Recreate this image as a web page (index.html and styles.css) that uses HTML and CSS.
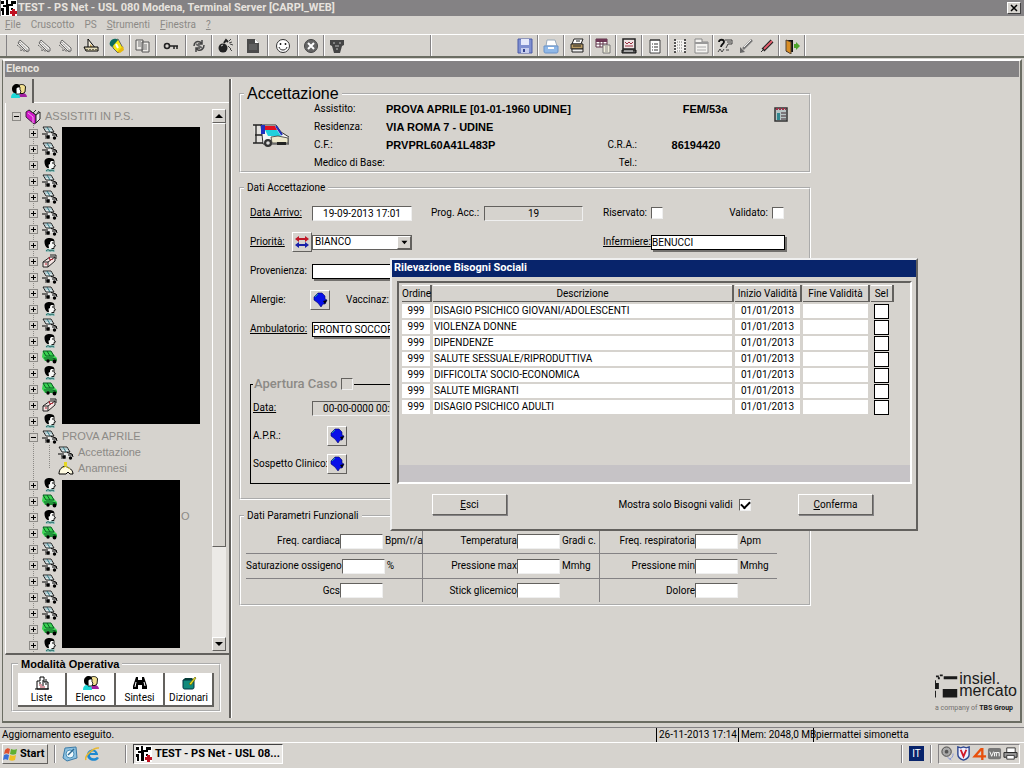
FILE: index.html
```html
<!DOCTYPE html>
<html lang="it">
<head>
<meta charset="utf-8">
<title>TEST - PS Net</title>
<link rel="stylesheet" href="styles.css">
</head>
<body>
<svg class="defs" aria-hidden="true">
  <symbol id="i-amb" viewBox="0 0 16 14"><path d="M1 1h8l3 5H4z" fill="#dfeaec" stroke="#111" stroke-width=".9"/><path d="M5 1l3 5" stroke="#256b75"/><path d="M3 3h7" stroke="#6aa0a8" stroke-width=".8"/><path d="M5 7h8l2 2v2H4z" fill="#e8e8e6"/><path d="M0 8h6M3 10h5M9 6.500l5 1.500 1 3M10 9h5" stroke="#000" fill="none"/><path d="M3 12h5" stroke="#000" stroke-width=".8"/><circle cx="6" cy="11" r="1.700"/><circle cx="12.500" cy="12" r="1.700"/></symbol>
  <symbol id="i-ambg" viewBox="0 0 16 14"><path d="M1 1h8l3 4 3 3v3H3L0 7z" fill="#3ad452"/><path d="M1 1h8l3 5H4zM5 1l3 5M2 8h8l4 1" fill="none" stroke="#0b5c24"/><path d="M3 10h12" stroke="#0a4a1c"/><circle cx="6" cy="11" r="1.700"/><circle cx="12.500" cy="11.500" r="1.900"/></symbol>
  <symbol id="i-per" viewBox="0 0 16 14"><path d="M4 14c-1-2 0-3 2-3l5-.5c2 .5 2 1.500 2 3.500z" fill="#9fc4c0"/><path d="M6 3h6v3l1.500 2-1.500.5v2l-2 .5H7z" fill="#f6f6f4"/><path d="M12 3v3l1.500 2-1.500.5v2H9.500" fill="none" stroke="#000" stroke-width=".9"/><path d="M2.500 4c0-3 2-4 5-4S12 .8 12.500 3H9L8 4.500V6.500L7 6l-.5 1.500.5 2.500H5.500C3.500 9 2.500 6.500 2.500 4z"/><path d="M10 5h1.500" stroke="#000"/><path d="M4 13l2-1.500 2 1.500 2-1 2 1" stroke="#1f6a64" fill="none"/></symbol>
  <symbol id="i-box" viewBox="0 0 16 14"><path d="M1 8l7-5h5v4l-7 6H1z" fill="#f4e4e2" stroke="#222"/><path d="M1 8h5v5M6 8l7-5" stroke="#222" fill="none"/><path d="M7 3l1 3 3-1M3 10h2" stroke="#b02030" fill="none"/><path d="M8 1h6v4" stroke="#222" fill="none"/></symbol>
  <symbol id="i-ana" viewBox="0 0 16 14"><path d="M1 12c0-5 3-7 6-8l4 2c2 1 4 3 4 6h-3l-2-2-2 2z" fill="#fffbe0" stroke="#000"/><path d="M6 0h3v4H6z" fill="#e6d820"/><path d="M5 6l3-2 4 3" fill="none" stroke="#d8cc30"/></symbol>
  <symbol id="i-book" viewBox="0 0 16 16"><path d="M1 3l3-2 7 5v8l-2 1-8-7z" fill="#d018c8" stroke="#402040"/><path d="M11 6l4-3v7l-4 4z" fill="#e8e8e8" stroke="#222"/><path d="M4 1l7 5 3-4M8 4l3-3" stroke="#333" fill="none"/><path d="M3 4l5 4v6" stroke="#f0a0ec" fill="none"/></symbol>
  <symbol id="i-two" viewBox="0 0 16 14"><path d="M8 13c0-3 2-4 4-4s4 2 4 4z" fill="#a020a0"/><path d="M0 14c0-4 2-5 4-5s5 1 5 5z" fill="#20d8d8"/><path d="M8 1.500C9 0 14 0 14.500 3L14 8l-2 1.500H9z" fill="#f2e090" stroke="#000" stroke-width=".9"/><path d="M4 3h5v3l1 1-1 3H5z" fill="#fff" stroke="#000" stroke-width=".8"/><path d="M1 5c0-3 2-5 5-5 2 0 3 1 3 3H7L5.500 4.500V9H4C2 9 1 7 1 5z"/></symbol>
  <symbol id="i-eraser" viewBox="0 0 16 16"><path d="M4 2l9 8v3h-3L2 5z" fill="#f3f1ee" stroke="#666"/><path d="M3.500 4l8 8M1 7l6 5M4 12l9 2" stroke="#666" stroke-dasharray="2 1"/></symbol>
  <symbol id="i-tri" viewBox="0 0 16 16"><path d="M5 1v10h8z" fill="#f4efe0" stroke="#000"/><path d="M7 6v3h3z" fill="#c9a24a"/><path d="M1 9h14v4H3z" fill="#e4dcb8" stroke="#000"/><path d="M4 11v1M7 11v1M10 11v1M13 11v1" stroke="#000"/></symbol>
  <symbol id="i-bucket" viewBox="0 0 16 16"><path d="M3 4l6-3 5 9-5 5-5-5z" fill="#f7e912" stroke="#666"/><path d="M1 4c2-4 6-4 8-2L3 9C1 8 0 6 1 4z" fill="#0e6b60"/><path d="M8 14l6-6 1 4-4 3z" fill="#e8b90c"/><path d="M7 6l2 4" stroke="#fff" stroke-width="2"/></symbol>
  <symbol id="i-pages" viewBox="0 0 16 16"><path d="M1 2h7v10H1zM7 4h7v10H7z" fill="#eceae6" stroke="#555"/><path d="M3 4h3M3 6h3M3 8h3M9 7h3M9 9h3M9 11h3" stroke="#777"/></symbol>
  <symbol id="i-key" viewBox="0 0 16 16"><circle cx="4" cy="8" r="2.500" fill="none" stroke="#222" stroke-width="1.600"/><path d="M6 8h9M11 8v3M14 8v3" stroke="#222" stroke-width="1.500"/></symbol>
  <symbol id="i-bin" viewBox="0 0 16 16"><path d="M3 8c0-4 3-5 6-4l2 2M13 7c0 4-3 6-6 5l-2-2M11 2v4H7M5 14v-4h4" fill="none" stroke="#444" stroke-width="1.500"/><path d="M5 6l6 4" stroke="#666" stroke-width="2"/></symbol>
  <symbol id="i-bomb" viewBox="0 0 16 16"><circle cx="6" cy="10" r="4.500" fill="#222"/><path d="M7 5l2-3 2 2" stroke="#222" stroke-width="2" fill="none"/><path d="M12 3l2-2M13 6l3 1M11 8l3 3M13 11l2 2M12 5l3-1" stroke="#444"/><path d="M4 8l2-1" stroke="#ccc"/></symbol>
  <symbol id="i-doc" viewBox="0 0 16 16"><path d="M2 1h8l4 4v10H2z" fill="#4b4b4b"/><path d="M10 1v4h4z" fill="#fff"/><path d="M4 7h8M4 9h8M4 11h8" stroke="#777"/></symbol>
  <symbol id="i-smile" viewBox="0 0 16 16"><circle cx="8" cy="8" r="6.500" fill="#fff" stroke="#333"/><path d="M5.500 5v2M10.500 5v2" stroke="#222" stroke-width="1.500"/><path d="M4 9c1 4 7 4 8 0" fill="none" stroke="#222"/></symbol>
  <symbol id="i-stop" viewBox="0 0 16 16"><circle cx="8" cy="8" r="6.500" fill="#666" stroke="#444"/><path d="M5 5l6 6M11 5l-6 6" stroke="#fff" stroke-width="2"/></symbol>
  <symbol id="i-mask" viewBox="0 0 16 16"><path d="M1 2h14v5l-2 1-2 7H5L3 8 1 7z" fill="#444"/><path d="M4 5h2M10 5h2M6 8h4M7 11h2" stroke="#bbb"/></symbol>
  <symbol id="i-save" viewBox="0 0 16 16"><path d="M1 1h14v14H1z" fill="#7f8fd0" stroke="#4a5aa8"/><path d="M4 1h8v6H4z" fill="#e4e8fa"/><path d="M4 10h8v5H4z" fill="#c6cdee"/><path d="M6 11h2v3H6z" fill="#35458f"/></symbol>
  <symbol id="i-tray" viewBox="0 0 16 16"><path d="M4 2h8l2 6H3z" fill="#fff" stroke="#9ab"/><path d="M1 8h14v5c0 2-1 2-2 2H3c-1 0-2 0-2-2z" fill="#8fb8e8" stroke="#6b93c9"/><path d="M5 10h6" stroke="#fff" stroke-width="2"/></symbol>
  <symbol id="i-print" viewBox="0 0 16 16"><path d="M5 1h9l-2 5H3z" fill="#fff" stroke="#222"/><path d="M2 6h12v5H2z" fill="#b89a62" stroke="#222"/><path d="M3 11h11v3H3z" fill="#eee" stroke="#222"/><path d="M7 3h4M4 8h8" stroke="#222"/></symbol>
  <symbol id="i-table" viewBox="0 0 16 16"><path d="M1 1h11v8H1z" fill="#fff" stroke="#5d3047"/><path d="M1 1h11v3H1z" fill="#6e3855"/><path d="M1 6h11M5 3v6M8 3v6" stroke="#5d3047"/><path d="M8 7h7v8H8z" fill="#f1efdc" stroke="#777"/><path d="M10 9h3M10 11h3M10 13h3" stroke="#888"/></symbol>
  <symbol id="i-cal" viewBox="0 0 16 16"><path d="M2 1h12v10H2z" fill="#f0e4e4" stroke="#222" stroke-width="1.500"/><path d="M4 4l2 2 2-2 2 2 2-2M4 8h8" stroke="#9b3040" fill="none"/><path d="M1 12h14v3H1z" fill="#555" stroke="#111"/><path d="M3 13h9" stroke="#fff"/></symbol>
  <symbol id="i-list" viewBox="0 0 16 16"><path d="M3 2h10v13H3z" fill="#fff" stroke="#444"/><path d="M4 1v2M6 1v2M8 1v2M10 1v2M12 1v2M5 6h1M5 9h1M5 12h1M7 6h4M7 9h4M7 12h4" stroke="#333"/></symbol>
  <symbol id="i-film" viewBox="0 0 16 16"><path d="M2 2h12v12H2z" fill="#f4f3f0"/><path d="M3 1v14M13 1v14" stroke="#222" stroke-width="1.500" stroke-dasharray="2 1"/><path d="M5 4h6M5 7h6M5 10h6M5 13h6" stroke="#777" stroke-dasharray="1 1"/></symbol>
  <symbol id="i-form" viewBox="0 0 16 16"><path d="M2 1h7v3h6v11H2z" fill="#f4f3f0" stroke="#888"/><path d="M2 4h13v2H2z" fill="#999"/><path d="M4 9h9M4 12h9" stroke="#aaa"/></symbol>
  <symbol id="i-ask" viewBox="0 0 16 16"><path d="M2 4c0-3 5-3 5 0 0 2-3 2-3 5" fill="none" stroke="#111" stroke-width="1.800"/><path d="M8 2h7v4h-4l-2 4M10 4h4M1 14l2-3 2 3 2-3M9 12h3" fill="none" stroke="#444"/></symbol>
  <symbol id="i-syr" viewBox="0 0 16 16"><path d="M14 2L5 11" stroke="#777" stroke-width="2.500"/><path d="M2 9l5 5-5 1z" fill="#666"/><path d="M13 2L6 9" stroke="#eee"/></symbol>
  <symbol id="i-term" viewBox="0 0 16 16"><path d="M13 3L4 12" stroke="#222" stroke-width="4"/><path d="M13 3L5 11" stroke="#e86070" stroke-width="1.800"/><path d="M2 14l2-2" stroke="#333"/></symbol>
  <symbol id="i-door" viewBox="0 0 16 16"><path d="M2 2h7v12H2z" fill="#111"/><path d="M2 2l5 2v12l-5-3z" fill="#d88d24" stroke="#543"/><path d="M10 6h2V4l4 4-4 4v-2h-2z" fill="#4da52c"/></symbol>
  <symbol id="i-app" viewBox="0 0 16 16"><path d="M0 0h16v16H0z" fill="#fff"/><path d="M0 1h3v3H0zM5 0h2v4h3V1h5v3h-3v2H8v9H5V7H2V5h3zM0 8h3v7H1v-4H0zM10 8h2v2h-2z"/><path d="M11 9h3v2h2v3h-2v2h-3v-2H9v-3h2z" fill="#c01020"/></symbol>
  <symbol id="i-blob" viewBox="0 0 16 16"><path d="M6 1h4l3 3v3l2 1-2 4h-2l-2 3-3-4-4-3V5l3-3z" fill="#0810e8" stroke="#000068" stroke-width=".6"/><path d="M11 9l4-1-2 4z"/><path d="M3 5l3-3" stroke="#1ba0a0"/></symbol>
</svg>

<header class="titlebar">
  <svg class="ic"><use href="#i-app"/></svg>
  <h1>TEST - PS Net - USL 080 Modena, Terminal Server [CARPI_WEB]</h1>
  <button class="close" type="button" aria-label="Chiudi"><svg viewBox="0 0 8 8"><path d="M1 1l6 6M7 1L1 7" stroke="#000" stroke-width="1.500"/></svg></button>
</header>
<nav class="menu">
  <a href="#"><u>F</u>ile</a><a href="#">Cruscotto</a><a href="#">PS</a><a href="#"><u>S</u>trumenti</a><a href="#"><u>F</u>inestra</a><a href="#"><u>?</u></a>
</nav>
<div class="toolbar">
  <div class="grp first"><button type="button" aria-label="Cancella 1"><svg class="ic"><use href="#i-eraser"/></svg></button><button type="button" aria-label="Cancella 2"><svg class="ic"><use href="#i-eraser"/></svg></button><button type="button" aria-label="Cancella 3"><svg class="ic"><use href="#i-eraser"/></svg></button></div>
  <div class="grp"><button type="button" aria-label="Squadra"><svg class="ic"><use href="#i-tri"/></svg></button></div>
  <div class="grp"><button type="button" aria-label="Colore"><svg class="ic"><use href="#i-bucket"/></svg></button></div>
  <div class="grp"><button type="button" aria-label="Copia"><svg class="ic"><use href="#i-pages"/></svg></button></div>
  <div class="grp wide"><button type="button" aria-label="Chiave"><svg class="ic"><use href="#i-key"/></svg></button></div>
  <div class="grp"><button type="button" aria-label="Aggiorna"><svg class="ic"><use href="#i-bin"/></svg></button></div>
  <div class="grp"><button type="button" aria-label="Elimina"><svg class="ic"><use href="#i-bomb"/></svg></button></div>
  <div class="grp wide"><button type="button" aria-label="Documento"><svg class="ic"><use href="#i-doc"/></svg></button></div>
  <div class="grp wide end"><button type="button" aria-label="Dimissione"><svg class="ic"><use href="#i-smile"/></svg></button></div>
  <div class="grp"><button type="button" aria-label="Annulla"><svg class="ic"><use href="#i-stop"/></svg></button></div>
  <div class="grp long"><button type="button" aria-label="Maschera"><svg class="ic"><use href="#i-mask"/></svg></button></div>
  <div class="grp long end"><button type="button" aria-label="Salva"><svg class="ic"><use href="#i-save"/></svg></button></div>
  <div class="grp"><button type="button" aria-label="Archivio"><svg class="ic"><use href="#i-tray"/></svg></button></div>
  <div class="grp"><button type="button" aria-label="Stampa"><svg class="ic"><use href="#i-print"/></svg></button></div>
  <div class="grp"><button type="button" aria-label="Tabella"><svg class="ic"><use href="#i-table"/></svg></button></div>
  <div class="grp"><button type="button" aria-label="Agenda"><svg class="ic"><use href="#i-cal"/></svg></button></div>
  <div class="grp"><button type="button" aria-label="Elenco voci"><svg class="ic"><use href="#i-list"/></svg></button></div>
  <div class="grp tight"><button type="button" aria-label="Referti"><svg class="ic"><use href="#i-film"/></svg></button><button type="button" aria-label="Scheda"><svg class="ic"><use href="#i-form"/></svg></button></div>
  <div class="grp tight"><button type="button" aria-label="Domande"><svg class="ic"><use href="#i-ask"/></svg></button><button type="button" aria-label="Terapia"><svg class="ic"><use href="#i-syr"/></svg></button><button type="button" aria-label="Temperatura"><svg class="ic"><use href="#i-term"/></svg></button></div>
  <div class="grp"><button type="button" aria-label="Uscita"><svg class="ic"><use href="#i-door"/></svg></button></div>
</div>

<div class="mdi">
  <h2 class="mdi-title">Elenco</h2>
  <div class="workspace">
    <aside class="side">
      <div class="tabs"><button type="button" aria-label="Assistiti"><svg class="ic"><use href="#i-two"/></svg></button></div>
      <div class="treebox">
        <div class="tree">
          <div class="node root"><i class="pm minus"></i><svg class="ic"><use href="#i-book"/></svg><span>ASSISTITI IN P.S.</span></div>
          <div class="branch">
            <div class="chunk one">
              <ul>
                <li><i class="pm"></i><svg class="ic"><use href="#i-amb"/></svg></li>
                <li><i class="pm"></i><svg class="ic"><use href="#i-amb"/></svg></li>
                <li><i class="pm"></i><svg class="ic"><use href="#i-per"/></svg></li>
                <li><i class="pm"></i><svg class="ic"><use href="#i-amb"/></svg></li>
                <li><i class="pm"></i><svg class="ic"><use href="#i-amb"/></svg></li>
                <li><i class="pm"></i><svg class="ic"><use href="#i-amb"/></svg></li>
                <li><i class="pm"></i><svg class="ic"><use href="#i-amb"/></svg></li>
                <li><i class="pm"></i><svg class="ic"><use href="#i-per"/></svg></li>
                <li><i class="pm"></i><svg class="ic"><use href="#i-box"/></svg></li>
                <li><i class="pm"></i><svg class="ic"><use href="#i-amb"/></svg></li>
                <li><i class="pm"></i><svg class="ic"><use href="#i-amb"/></svg></li>
                <li><i class="pm"></i><svg class="ic"><use href="#i-per"/></svg></li>
                <li><i class="pm"></i><svg class="ic"><use href="#i-amb"/></svg></li>
                <li><i class="pm"></i><svg class="ic"><use href="#i-per"/></svg></li>
                <li><i class="pm"></i><svg class="ic"><use href="#i-ambg"/></svg></li>
                <li><i class="pm"></i><svg class="ic"><use href="#i-per"/></svg></li>
                <li><i class="pm"></i><svg class="ic"><use href="#i-ambg"/></svg></li>
                <li><i class="pm"></i><svg class="ic"><use href="#i-box"/></svg></li>
                <li><i class="pm"></i><svg class="ic"><use href="#i-per"/></svg></li>
              </ul>
              <div class="mask"></div>
            </div>
            <div class="node"><i class="pm minus"></i><svg class="ic"><use href="#i-amb"/></svg><span>PROVA APRILE</span></div>
            <div class="leaves">
              <div class="node"><svg class="ic"><use href="#i-amb"/></svg><span>Accettazione</span></div>
              <div class="node"><svg class="ic"><use href="#i-ana"/></svg><span>Anamnesi</span></div>
            </div>
            <div class="chunk two">
              <ul>
                <li><i class="pm"></i><svg class="ic"><use href="#i-per"/></svg></li>
                <li><i class="pm"></i><svg class="ic"><use href="#i-ambg"/></svg></li>
                <li><i class="pm"></i><svg class="ic"><use href="#i-per"/></svg></li>
                <li><i class="pm"></i><svg class="ic"><use href="#i-ambg"/></svg></li>
                <li><i class="pm"></i><svg class="ic"><use href="#i-amb"/></svg></li>
                <li><i class="pm"></i><svg class="ic"><use href="#i-amb"/></svg></li>
                <li><i class="pm"></i><svg class="ic"><use href="#i-amb"/></svg></li>
                <li><i class="pm"></i><svg class="ic"><use href="#i-amb"/></svg></li>
                <li><i class="pm"></i><svg class="ic"><use href="#i-amb"/></svg></li>
                <li><i class="pm"></i><svg class="ic"><use href="#i-ambg"/></svg></li>
                <li><i class="pm"></i><svg class="ic"><use href="#i-per"/></svg></li>
              </ul>
              <div class="mask"></div>
              <span class="tail">O</span>
            </div>
          </div>
        </div>
        <div class="scroll">
          <button type="button" aria-label="Su"><svg viewBox="0 0 8 8"><path d="M0 6l4-4 4 4z"/></svg></button>
          <div class="thumb"></div>
          <div class="track"></div>
          <button type="button" aria-label="Giù"><svg viewBox="0 0 8 8"><path d="M0 2l4 4 4-4z"/></svg></button>
        </div>
      </div>
      <fieldset class="modes">
        <legend>Modalità Operativa</legend>
        <div class="modebar">
          <button type="button"><svg class="ic" viewBox="0 0 16 14"><path d="M3 13V5h3V1h4v5h4v7z" fill="#fff" stroke="#000"/><path d="M1 13h14M5 7h2M9 4v6M11 8h2M12 3v3" stroke="#000"/><path d="M5 9h3M6 11h5" stroke="#b03040"/></svg>Liste</button>
          <button type="button"><svg class="ic"><use href="#i-two"/></svg>Elenco</button>
          <button type="button"><svg class="ic" viewBox="0 0 16 14"><path d="M4 1h2v3h4V1h2l3 9v3h-5V9H6v4H1v-3z"/><path d="M4 6l-1 5M12 6l1 4" stroke="#fff"/></svg>Sintesi</button>
          <button type="button"><svg class="ic" viewBox="0 0 16 14"><path d="M2 4h11v7c0 2-1 2-2 2H4c-1 0-2 0-2-2z" fill="#118a7c" stroke="#034"/><path d="M2 4l2-2h7l2 2z" fill="#063c38"/><path d="M8 8l6-7 1 1-5 7z" fill="#e8e020" stroke="#550" stroke-width=".6"/></svg>Dizionari</button>
        </div>
      </fieldset>
    </aside>

    <main class="main">
      <form class="groups">
        <fieldset class="patient">
          <legend>Accettazione</legend>
          <div class="patient-grid">
            <svg class="van" viewBox="0 0 36 24"><path d="M0 1h12v19H3z" fill="#e4e2de"/><path d="M8 1h15l5 7 8 5v7H10z" fill="#f4f4f4" stroke="#333"/><path d="M0 1h9M3 1v18M2 11h7M0 19h10" stroke="#222" stroke-width="1.300" fill="none"/><path d="M11 2h11l2 4H12z" fill="#e01020"/><path d="M8 1h4v9H8z" fill="#2030c0"/><path d="M12 6h12l4 6H15z" fill="#20d0dc"/><path d="M23 2l6 9" stroke="#2030c0" stroke-width="2"/><path d="M18 13l7-1 10 2v5H19z" fill="#ece8cc" stroke="#333" stroke-width=".8"/><circle cx="15" cy="19" r="4" fill="#333"/><circle cx="15" cy="19" r="1.800" fill="#ddd"/><path d="M24 18h9v3h-9z" fill="#222"/></svg>
            <span>Assistito:</span><b>PROVA APRILE [01-01-1960 UDINE]</b><span></span><b class="c">FEM/53a</b>
            <button class="note" type="button" aria-label="Note"><svg class="ic" viewBox="0 0 16 16"><path d="M2 2h12v13H2z" fill="#b8c4c4" stroke="#333" stroke-width="1.500"/><path d="M3 3h10" stroke="#a03048" stroke-width="2" stroke-dasharray="2 1"/><path d="M4 7h3v7H4z" fill="#308890"/><path d="M8 7h5M8 10h5M8 13h5" stroke="#402830"/></svg></button>
            <span>Residenza:</span><b>VIA ROMA 7 - UDINE</b><span></span><b></b>
            <span>C.F.:</span><b>PRVPRL60A41L483P</b><span class="r">C.R.A.:</span><b class="c code">86194420</b>
            <span>Medico di Base:</span><b></b><span class="r">Tel.:</span><b></b>
          </div>
        </fieldset>

        <fieldset class="accept">
          <legend>Dati Accettazione</legend>
          <div class="accept-grid">
            <label class="head ul" for="arr">Data Arrivo:</label>
            <input id="arr" class="txt mid" value="19-09-2013 17:01">
            <div class="cell prog"><label for="prog">Prog. Acc.:</label><input id="prog" class="txt mid ro" value="19" readonly></div>
            <label for="ris">Riservato:</label>
            <div class="cell split"><input id="ris" type="checkbox"><span class="cell"><label for="val">Validato:</label><input id="val" type="checkbox"></span></div>

            <div class="head cell split"><label class="ul" for="pri">Priorità:</label><button class="sq" type="button" aria-label="Cambia priorità"><svg class="ic" viewBox="0 0 16 16"><path d="M1 5l4-3v2h6V2l4 3-4 3V6H5v2z" fill="#c01828"/><path d="M1 11l4-3v2h6V8l4 3-4 3v-2H5v2z" fill="#1820a8"/></svg></button></div>
            <span class="combo"><select id="pri"><option>BIANCO</option></select><svg viewBox="0 0 14 12"><path d="M4 4h7l-3.500 4z"/></svg></span>
            <span></span>
            <label class="ul" for="inf">Infermiere:</label>
            <input id="inf" class="box" value="BENUCCI">

            <label class="head" for="prov">Provenienza:</label>
            <input id="prov" class="box span">

            <span class="head">Allergie:</span>
            <div class="cell allergy"><button class="sq" type="button" aria-label="Allergie"><svg class="ic"><use href="#i-blob"/></svg></button><span>Vaccinaz:</span></div>

            <label class="head ul" for="amb">Ambulatorio:</label>
            <input id="amb" class="box span" value="PRONTO SOCCORSO">
          </div>
          <fieldset class="case">
            <legend><label for="caso">Apertura Caso</label><input id="caso" type="checkbox"></legend>
            <div class="line"><label class="ul" for="dat">Data:</label><input id="dat" class="txt mid ro" value="00-00-0000 00:00" readonly></div>
            <div class="line far"><span>A.P.R.:</span><button class="sq" type="button" aria-label="A.P.R."><svg class="ic"><use href="#i-blob"/></svg></button></div>
            <div class="line far"><span>Sospetto Clinico:</span><button class="sq" type="button" aria-label="Sospetto Clinico"><svg class="ic"><use href="#i-blob"/></svg></button></div>
          </fieldset>
        </fieldset>

        <fieldset class="vitals">
          <legend>Dati Parametri Funzionali</legend>
          <div class="vital-grid">
            <div><label for="v1">Freq. cardiaca</label><input id="v1" class="txt"><span>Bpm/r/a</span></div>
            <div><label for="v2">Temperatura</label><input id="v2" class="txt"><span>Gradi c.</span></div>
            <div><label for="v3">Freq. respiratoria</label><input id="v3" class="txt"><span>Apm</span></div>
            <div><label for="v4">Saturazione ossigeno</label><input id="v4" class="txt"><span>%</span></div>
            <div><label for="v5">Pressione max</label><input id="v5" class="txt"><span>Mmhg</span></div>
            <div><label for="v6">Pressione min</label><input id="v6" class="txt"><span>Mmhg</span></div>
            <div><label for="v7">Gcs</label><input id="v7" class="txt"><span></span></div>
            <div><label for="v8">Stick glicemico</label><input id="v8" class="txt"><span></span></div>
            <div><label for="v9">Dolore</label><input id="v9" class="txt"><span></span></div>
          </div>
        </fieldset>
      </form>
      <div class="brand">
        <div class="brand-top">
          <svg viewBox="0 0 24 25"><path d="M1 1h3v2H1zM5 0h3v2H5zM3 3h2v2H3zM9 2h14v3H9zM0 9h4v6H0zM0 6h1v3H0zM0 17h1v7H0zM8 15h15v9H8z" fill="#1a1a1a"/></svg>
          <div class="brand-name"><span>insiel.</span><span>mercato</span></div>
        </div>
        <div class="brand-sub">a company of <b>TBS Group</b></div>
      </div>
    </main>
  </div>
</div>

<div class="status">
  <span class="msg">Aggiornamento eseguito.</span><span class="date">26-11-2013 17:14</span><span class="mem">Mem: 2048,0 MB</span><span class="user">piermattei simonetta</span>
</div>
<footer class="taskbar">
  <button class="start" type="button"><svg class="ic" viewBox="0 0 16 16"><path d="M2 4c2-2 3-2 5-1L6 8C4 7 3 7 1 8z" fill="#e05030"/><path d="M8 3c2 1 4 1 6 0l-1 5c-2 1-4 1-6 0z" fill="#60b030"/><path d="M1 9c2-1 3-1 5 0l-1 5c-2-1-3-1-5 0z" fill="#3a70d8"/><path d="M7 9c2 1 4 1 6 0l-1 5c-2 1-4 1-6 0z" fill="#f0c020"/></svg>Start</button>
  <i class="sep"></i>
  <div class="quick">
    <button type="button" aria-label="Desktop"><svg class="ic" viewBox="0 0 16 16"><path d="M3 2l11-1 1 11-10 3-4-3z" fill="#8cc0e0" stroke="#3c7ca8"/><circle cx="8" cy="8" r="4" fill="#eef8fc" stroke="#4a90b8"/><path d="M6 9l6-6" stroke="#2c6890" stroke-width="1.500"/></svg></button>
    <button type="button" aria-label="Internet Explorer"><svg class="ic" viewBox="0 0 16 16"><path d="M13 9H5c0 4 5 4 7 2l2 1c-3 5-12 3-12-3s9-8 11-1z" fill="#1c88d0"/><path d="M6 7h4c0-2-4-2-4 0z" fill="#d6d3ce"/><path d="M1 14c-2-4 8-13 13-12" fill="none" stroke="#e8b830" stroke-width="1.500"/></svg></button>
  </div>
  <i class="sep"></i>
  <button class="task" type="button"><svg class="ic"><use href="#i-app"/></svg>TEST - PS Net - USL 08...</button>
  <span class="fill"></span>
  <i class="sep"></i>
  <span class="lang">IT</span>
  <i class="sep"></i>
  <div class="tray">
    <svg class="ic" viewBox="0 0 16 16"><circle cx="7" cy="6" r="5" fill="#aaa" stroke="#444"/><circle cx="7" cy="6" r="2" fill="#555"/><path d="M10 14c3-1 4-3 4-6M8 12l4 3" stroke="#8898d8" fill="none"/></svg>
    <svg class="ic" viewBox="0 0 16 16"><path d="M2 1l3 1 3-1 3 1 3-1v8c0 3-3 5-6 6-3-1-6-3-6-6z" fill="#eef" stroke="#2c4690" stroke-width="1.500"/><path d="M5 4l3 7 3-7" fill="none" stroke="#d01828" stroke-width="2"/></svg>
    <svg class="ic" viewBox="0 0 16 16"><path d="M11 2v13M15 11H3l7-8" fill="none" stroke="#e8500c" stroke-width="2.500"/></svg>
    <svg class="ic" viewBox="0 0 16 16"><rect x="1" y="2" width="14" height="12" rx="2" fill="#777"/><path d="M3 6l2 5 2-5M8 11V7h2v4M10 7h3v4" fill="none" stroke="#fff"/></svg>
    <svg class="ic" viewBox="0 0 16 16"><path d="M4 2h9v5H4z" fill="#fff" stroke="#333"/><path d="M1 7h14v5H1z" fill="#999" stroke="#222"/><path d="M4 10h8v4H4z" fill="#fff" stroke="#333"/></svg>
  </div>
</footer>

<section class="dialog" role="dialog" aria-labelledby="dt">
  <h2 id="dt">Rilevazione Bisogni Sociali</h2>
  <div class="frame">
    <table>
      <colgroup><col class="c1"><col><col class="c3"><col class="c3"><col class="c5"></colgroup>
      <thead><tr><th>Ordine</th><th>Descrizione</th><th>Inizio Validità</th><th>Fine Validità</th><th>Sel</th></tr></thead>
      <tbody>
        <tr><td>999</td><td>DISAGIO PSICHICO GIOVANI/ADOLESCENTI</td><td>01/01/2013</td><td></td><td><input type="checkbox" aria-label="Seleziona riga 1"></td></tr>
        <tr><td>999</td><td>VIOLENZA DONNE</td><td>01/01/2013</td><td></td><td><input type="checkbox" aria-label="Seleziona riga 2"></td></tr>
        <tr><td>999</td><td>DIPENDENZE</td><td>01/01/2013</td><td></td><td><input type="checkbox" aria-label="Seleziona riga 3"></td></tr>
        <tr><td>999</td><td>SALUTE SESSUALE/RIPRODUTTIVA</td><td>01/01/2013</td><td></td><td><input type="checkbox" aria-label="Seleziona riga 4"></td></tr>
        <tr><td>999</td><td>DIFFICOLTA' SOCIO-ECONOMICA</td><td>01/01/2013</td><td></td><td><input type="checkbox" aria-label="Seleziona riga 5"></td></tr>
        <tr><td>999</td><td>SALUTE MIGRANTI</td><td>01/01/2013</td><td></td><td><input type="checkbox" aria-label="Seleziona riga 6"></td></tr>
        <tr><td>999</td><td>DISAGIO PSICHICO ADULTI</td><td>01/01/2013</td><td></td><td><input type="checkbox" aria-label="Seleziona riga 7"></td></tr>
      </tbody>
    </table>
    <div class="strip"></div>
  </div>
  <div class="actions">
    <button type="button"><u>E</u>sci</button>
    <span class="only"><label for="only">Mostra solo Bisogni validi</label><input id="only" type="checkbox" checked></span>
    <button type="button"><u>C</u>onferma</button>
  </div>
</section>
</body>
</html>
```
FILE: styles.css
```css
* { box-sizing: border-box; }
:root {
  --face: #d6d3ce;
  --dark: #848284;
  --ink: #424142;
}
body {
  position: relative;
  display: flex;
  flex-direction: column;
  min-height: 100vh;
  margin: 0;
  background: var(--face);
  color: #000;
  font: 10px/12px Roboto, "Liberation Sans", sans-serif;
  white-space: nowrap;
}
h1, h2 { margin: 0; font-size: 11px; font-weight: 700; }
button, input, select { margin: 0; padding: 0; font: inherit; color: inherit; border-radius: 0; }
button { background: var(--face); border: 0; }
ul { margin: 0; padding: 0; list-style: none; }
.defs { position: absolute; width: 0; height: 0; }
.ic { display: block; flex: none; width: 16px; height: 16px; fill: #000; }

/* window title, menu, toolbar */
.titlebar { display: flex; align-items: center; gap: 1px; height: 16px; padding: 0 3px 0 1px; background: var(--dark); color: #e7e3de; }
.titlebar h1 { flex: 1; }
.close { width: 14px; height: 12px; border: 1px solid; border-color: #fff var(--ink) var(--ink) #fff; }
.close svg { display: block; width: 8px; height: 8px; margin: auto; }
.menu { display: flex; align-items: center; gap: 10px; height: 18px; padding: 0 5px; }
.menu a { color: #8c8a86; font-size: 10px; text-decoration: none; }
.toolbar { display: flex; height: 24px; padding-left: 12px; border-top: 1px solid #fff; border-bottom: 2px solid #6b6d63; box-shadow: inset 6px 0 var(--face), inset 7px 0 var(--dark); }
.grp { display: flex; padding: 0 2px; border-right: 1px solid var(--dark); box-shadow: 1px 0 #fff; }
.grp.first { padding: 0 1px; }
.grp.wide { padding: 0 4px; }
.grp.tight { padding: 0 1px; }
.grp.long { flex: none; width: 107px; }
.grp.end { justify-content: flex-end; }
.grp button { display: grid; place-items: center; width: 21px; background: none; }

/* inner window */
.mdi { display: flex; flex-direction: column; flex: 1; margin: 1px 2px 4px; border: solid; border-color: #fff #6b6d63 #6b6d63 #6b6d63; border-width: 2px; border-left-width: 1px; }
.mdi-title { height: 16px; margin: 0 1px 0 2px; padding: 1px 1px; background: var(--dark); color: #e7e3de; line-height: 14px; }
.workspace { display: flex; flex: 1; padding-left: 2px; }
.side { flex: none; width: 226px; margin: 2px 0 3px; border-right: 2px solid #63615e; box-shadow: 1px 0 #fff; }
.tabs { height: 24px; border-bottom: 1px solid #fff; }
.tabs button { display: grid; place-items: center; width: 29px; height: 24px; border-right: 2px solid #63615e; }
.treebox { display: flex; padding-right: 3px; border-bottom: 2px solid #63615e; border-left: 1px solid #fff; overflow: hidden; }
.tree { flex: 1; padding: 5px 0 0 6px; color: #8c8a86; font: 11px/14px "Liberation Sans", Arial, sans-serif; }
.node { display: flex; align-items: center; gap: 4px; height: 16px; }
.node span { padding-bottom: 2px; }
.pm { position: relative; flex: none; width: 9px; height: 9px; border: 1px solid #8c8a86; background: linear-gradient(#000, #000) center / 5px 1px no-repeat, linear-gradient(#000, #000) center / 1px 5px no-repeat var(--face); }
.pm.minus { background: linear-gradient(#000, #000) center / 5px 1px no-repeat var(--face); }
.root { height: 17px; }
.branch { padding-left: 17px; background: repeating-linear-gradient(#8c8a86 0 1px, transparent 1px 2px) 21px 0 / 1px 100% no-repeat; }
.branch .ic { height: 14px; }
.leaves { margin-left: 20px; padding-left: 9px; background: repeating-linear-gradient(#8c8a86 0 1px, transparent 1px 2px) 0 0 / 1px 24px no-repeat; }
.chunk { display: flex; gap: 4px; }
.chunk li { display: flex; align-items: center; gap: 4px; height: 16px; }
.mask { background: #000; }
.one .mask { width: 138px; margin: 2px 0 5px; }
.two .mask { width: 118px; margin: 3px 0 5px; }
.tail { align-self: flex-start; padding-top: 32px; margin-left: -3px; }
.scroll { display: flex; flex-direction: column; flex: none; width: 14px; margin: 6px 0 2px; }
.scroll button { display: grid; place-items: center; height: 14px; border: 1px solid; border-color: #fff #63615e #63615e #fff; }
.scroll svg { width: 8px; height: 8px; }
.thumb { flex: 424; border: 1px solid; border-color: #fff #63615e #63615e #fff; }
.track { flex: 91; background: #eceae7; }

fieldset { min-width: 0; margin: 0; padding: 0; border: 2px groove #fff; }
legend { padding: 0 3px; line-height: 12px; }
.modes { margin: 3px 8px 0 6px; padding: 3px 5px; }
.modes legend { font: 700 11px/12px "Liberation Sans", Arial, sans-serif; }
.modebar { display: grid; grid-template-columns: repeat(4, 1fr); }
.modebar button { display: flex; flex-direction: column; align-items: center; justify-content: center; gap: 1px; height: 34px; background: #fff; border: solid #63615e; border-width: 0 2px 2px 0; }

/* right pane */
.main { display: flex; flex: 1; justify-content: space-between; padding: 11px 3px 7px 8px; }
.groups { flex: 1; }
.patient legend { font: 16px/12px "Liberation Sans", Arial, sans-serif; }
.patient, .accept, .vitals { padding-left: 3px; }
.patient-grid { display: grid; grid-template-columns: 70px 72px 1fr 60px 136px 36px; grid-auto-rows: 17px; row-gap: 1px; align-items: center; }
.patient-grid b { font: 700 11px/14px "Liberation Sans", Arial, sans-serif; }
.patient-grid .c { text-align: center; }
.patient-grid .code { padding-right: 18px; }
.r { text-align: right; }
.van { grid-row: 1 / 5; width: 36px; height: 24px; margin-left: 9px; }
.note { grid-column: 6; grid-row: 1 / 5; align-self: start; padding-top: 6px; }
.accept { margin-top: 9px; padding-bottom: 14px; }
.accept-grid { display: grid; grid-template-columns: 62px 100px 1fr 48px 134px; grid-auto-rows: 28px; row-gap: 1px; align-items: center; padding: 5px 24px 0 6px; }
.head { grid-column: 1; }
.ul { text-decoration: underline; }
.cell { display: flex; align-items: center; }
.split { justify-content: space-between; }
.split .cell { gap: 4px; padding-right: 1px; }
.txt, .box { width: 100%; min-width: 0; height: 15px; background: #fff; outline: 0; }
.txt { border: 1px solid; border-color: #63615e #efefef #efefef #63615e; }
.box { border: 1px solid #000; box-shadow: 2px 2px #73716e; }
.mid { text-align: center; }
.ro { background: var(--face); }
.prog { gap: 5px; padding-left: 19px; }
.prog .txt { width: 99px; }
.span { grid-column: 2 / 4; }
.allergy { grid-column: 2 / 4; gap: 16px; margin-left: -2px; }
.sq { display: grid; place-items: center; width: 20px; height: 20px; border: 1px solid; border-color: #fff #63615e #63615e #fff; }
.combo { position: relative; display: block; }
.combo select { display: block; width: 100%; height: 15px; padding-left: 2px; appearance: none; background: #fff; border: 1px solid #63615e; outline: 0; }
.combo svg { position: absolute; top: 1px; right: 1px; width: 14px; height: 13px; background: var(--face); border: 1px solid; border-color: #fff #63615e #63615e #fff; pointer-events: none; }
input[type=checkbox] { position: relative; flex: none; width: 12px; height: 12px; appearance: none; background: #fff; border: 1px solid; border-color: #63615e #efefef #efefef #63615e; }
input[type=checkbox]:checked::after { content: ""; position: absolute; left: 1px; top: 1px; width: 7px; height: 4px; border: solid #000; border-width: 0 0 2px 2px; transform: rotate(-45deg); }

.case { margin: 33px 24px 0 6px; padding: 2px 2px 5px; border: 1px solid #000; }
.case legend { display: flex; align-items: center; gap: 4px; padding: 0 1px; color: #8c8a86; font: 500 13px/16px Roboto, "Liberation Sans", sans-serif; }
.case legend input { background: var(--face); }
.line { display: flex; align-items: center; height: 28px; }
.line .ul { width: 59px; }
.line .txt { width: 100px; }
.far span { width: 74px; }
.vitals { margin-top: 10px; }
.vital-grid { display: grid; grid-template-columns: repeat(3, minmax(0, 1fr)); padding: 7px 32px 2px 2px; }
.vital-grid div { display: grid; grid-template-columns: 1fr 43px 39px; align-items: center; height: 25px; border-right: 1px solid var(--dark); border-bottom: 1px solid var(--dark); }
.vital-grid div:nth-child(3n) { border-right: 0; }
.vital-grid div:nth-child(n+7) { height: 23px; border-bottom: 0; }
.vital-grid label { text-align: right; }
.vital-grid span { padding-left: 2px; }

.brand { flex: none; align-self: flex-end; width: 206px; padding-left: 124px; }
.brand-top { display: flex; gap: 1px; }
.brand-top svg { width: 24px; height: 25px; margin-top: 1px; }
.brand-name { display: flex; flex-direction: column; color: #1a1a1a; font: 16px/12px "Liberation Sans", Arial, sans-serif; }
.brand-sub { margin-top: 3px; color: #73716e; font-size: 7px; }
.brand-sub b { color: #1a1a1a; }

/* status and task bar */
.status { display: flex; height: 16px; border-top: 1px solid var(--dark); border-bottom: 1px solid #fff; line-height: 14px; }
.status span { padding-left: 2px; }
.msg { flex: 1; }
.date, .mem, .user { border-left: 1px solid #000; }
.date { width: 82px; }
.mem { width: 75px; }
.user { width: 211px; }
.taskbar { display: flex; align-items: center; gap: 6px; height: 25px; padding: 0 4px 4px 2px; }
.taskbar button { display: flex; align-items: center; }
.start, .task { font-size: 11px; font-weight: 700; }
.start { gap: 1px; width: 46px; height: 20px; border: 1px solid; border-color: #fff #63615e #63615e #fff; }
.sep { width: 2px; height: 18px; border-left: 1px solid var(--dark); border-right: 1px solid #fff; }
.quick { display: flex; gap: 7px; width: 57px; }
.task { gap: 3px; height: 20px; padding: 0 2px; background: #e9e7e4; border: 1px solid; border-color: #424142 #fff #fff #424142; }
.fill { flex: 1; }
.lang { width: 15px; height: 15px; background: #08246b; color: #fff; line-height: 15px; text-align: center; }
.tray { display: flex; align-items: center; justify-content: space-between; width: 82px; height: 20px; padding: 0 1px; border: 1px solid; border-color: var(--dark) #fff #fff var(--dark); }
.tray .ic { width: 15px; height: 15px; }

/* modal window over the form */
.dialog { position: absolute; left: 390px; top: 258px; width: 528px; background: var(--face); border: 2px solid; border-color: #efefef #63615e #63615e #efefef; }
.dialog h2 { height: 17px; padding-left: 2px; background: #08246b; color: #fff; line-height: 16px; }
.frame { margin: 4px 4px 0 5px; border: 2px solid; border-color: #63615e #fff #fff #63615e; }
.dialog table { width: calc(100% - 15px); table-layout: fixed; border-spacing: 3px 2px; }
.c1 { width: 28px; }
.c3 { width: 65px; }
.c5 { width: 21px; }
.dialog th { height: 17px; padding: 0; font-weight: 400; line-height: 14px; background: var(--face); border-top: 1px solid #fff; box-shadow: inset 0 -1px #63615e, 2px 0 #63615e; }
.dialog td { height: 14px; padding: 0 1px; background: #fff; line-height: 14px; text-align: center; }
.dialog td:nth-child(2) { text-align: left; }
.dialog td:last-child { background: none; }
.dialog td input[type=checkbox] { display: block; width: 15px; height: 15px; margin: -1px auto 0; margin-bottom: -1px; border-color: #000; }
.strip { height: 17px; margin-top: 49px; background: #c6c3c6; }
.actions { display: flex; align-items: center; justify-content: space-between; padding: 10px 43px 14px 40px; }
.actions button { width: 75px; height: 21px; border: 1px solid; border-color: #fff #63615e #63615e #fff; box-shadow: 1px 1px #848284; }
.only { display: flex; align-items: center; gap: 6px; padding-left: 64px; }
```
